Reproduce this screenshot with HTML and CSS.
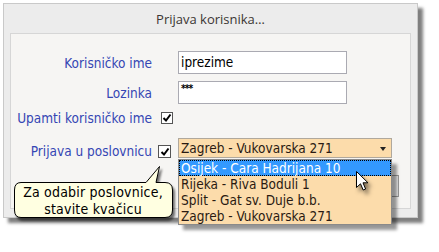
FILE: index.html
```html
<!DOCTYPE html>
<html lang="hr">
<head>
  <meta charset="UTF-8" />
  <title>Prijava korisnika</title>
  <link rel="stylesheet" href="styles.css">
</head>
<body>
  <div class="stage">
    <div class="window">
      <div class="window-title">Prijava korisnika…</div>

      <div class="panel">
        <div class="row row-input">
          <label class="label">Korisničko ime</label>
          <div class="field">iprezime</div>
        </div>

        <div class="row row-input">
          <label class="label">Lozinka</label>
          <div class="field field-pass">***</div>
        </div>

        <div class="row row-check">
          <label class="label">Upamti korisničko ime</label>
          <span class="check">
            <svg width="10" height="10" viewBox="0 0 10 10"><path d="M1.5 5 L4 7.5 L8.5 1.5" fill="none" stroke="#000" stroke-width="2"/></svg>
          </span>
        </div>

        <div class="row row-office">
          <label class="label">Prijava u poslovnicu</label>
          <span class="check check-office">
            <svg width="10" height="10" viewBox="0 0 10 10"><path d="M1.5 5 L4 7.5 L8.5 1.5" fill="none" stroke="#000" stroke-width="2"/></svg>
          </span>
          <div class="select-wrap">
            <div class="select">
              <span>Zagreb - Vukovarska 271</span>
              <span class="arrow"></span>
            </div>
            <ul class="dropdown">
              <li class="active">Osijek - Cara Hadrijana 10</li>
              <li>Rijeka - Riva Boduli 1</li>
              <li>Split - Gat sv. Duje b.b.</li>
              <li>Zagreb - Vukovarska 271</li>
            </ul>
          </div>
        </div>

        <div class="row row-button">
          <button class="btn">Prijava</button>
        </div>
      </div>
    </div>

    <!-- tooltip balloon -->
    <div class="balloon">
      <svg class="balloon-shape" width="166" height="58" viewBox="0 0 166 58">
        <path d="M9 18.5 H134 L147.5 2.5 L144 18.5 H153 Q160.5 18.5 160.5 26 V46 Q160.5 53.5 153 53.5 H9 Q2.5 53.5 2.5 46 V26 Q2.5 18.5 9 18.5 Z" fill="#ffffe1" stroke="#000" stroke-width="1"/>
      </svg>
      <div class="balloon-text">Za odabir poslovnice,<br>stavite kvačicu</div>
    </div>

    <!-- mouse cursor -->
    <svg class="cursor" width="14" height="21" viewBox="0 0 14 21">
      <path d="M0.5 0.5 L0.5 16.5 L4.5 12.8 L7.2 19 L9.6 18 L7 11.8 L12 11.8 Z" fill="#fff" stroke="#000" stroke-width="1"/>
    </svg>
  </div>
</body>
</html>
```

FILE: styles.css
```css
* {
  margin: 0;
  padding: 0;
  box-sizing: border-box;
}

body {
  background: #fff;
  font-family: "DejaVu Sans Condensed", "DejaVu Sans", sans-serif;
  font-size: 13.5px;
  color: #000;
}

.stage {
  position: relative;
  width: 439px;
  height: 252px;
  overflow: hidden;
}

.window {
  margin: 3px 0 0 3px;
  width: 415px;
  height: 215px;
  background: #ececec;
  border: 1px solid #c9c9c9;
  box-shadow: 5px 5px 3px rgba(0, 0, 0, 0.5);
}

.window-title {
  height: 29px;
  text-align: center;
  font-family: "Open Sans", "Noto Sans", sans-serif;
  font-size: 13px;
  line-height: 31px;
  color: #3b3633;
}

.panel {
  margin: 0 6px 0 6px;
  height: 176px;
  background: #f6f5f3;
  border: 1px solid #d6d6d6;
  padding-top: 17px;
}

.row {
  display: flex;
  align-items: center;
}

.label {
  width: 141px;
  flex: none;
  text-align: right;
  color: #3546b4;
  white-space: nowrap;
}

.row-input {
  height: 23px;
  margin-bottom: 7px;
}

.field {
  margin-left: 26px;
  width: 169px;
  height: 23px;
  background: #fff;
  border: 1px solid #aaaab2;
  padding-left: 2px;
  line-height: 21px;
}

.field-pass {
  font-size: 10px;
  font-weight: bold;
  line-height: 10px;
  padding-top: 2px;
  letter-spacing: -1px;
}

.row-check {
  height: 14px;
  margin-top: 4px;
}

.check {
  margin-left: 9px;
  width: 12px;
  height: 12px;
  border: 1px solid #555;
  background: #fff;
  display: flex;
  align-items: center;
  justify-content: center;
}

.row-office {
  margin-top: 13px;
  height: 20px;
  align-items: flex-end;
}

.row-office .label {
  margin-bottom: -1px;
}

.check-office {
  margin-left: 6px;
  width: 13px;
  height: 13px;
}

.select-wrap {
  position: relative;
  margin-left: 7px;
  align-self: flex-start;
}

.select {
  width: 214px;
  height: 20px;
  background: #fcdcab;
  border: 1px solid #b0a89c;
  display: flex;
  align-items: center;
  justify-content: space-between;
  padding: 0 5px 0 2px;
  color: #2a1a12;
}

.arrow {
  width: 0;
  height: 0;
  border-left: 3.5px solid transparent;
  border-right: 3.5px solid transparent;
  border-top: 4px solid #222;
  margin-top: 1px;
}

.dropdown {
  position: absolute;
  left: 0;
  top: 21px;
  width: 214px;
  list-style: none;
  background: #fcdcab;
  border: 1px solid #8a8a8a;
  box-shadow: 5px 5px 3px rgba(0, 0, 0, 0.4);
  color: #2a1a12;
  z-index: 2;
}

.dropdown li {
  height: 16px;
  line-height: 16px;
  padding-left: 2px;
}

.dropdown li.active {
  background: #3399ff;
  color: #fff;
  border: 1px dotted #000;
  line-height: 14px;
  padding-left: 1px;
}

.row-button {
  margin-top: 17px;
  justify-content: flex-end;
  padding-right: 11px;
}

.btn {
  width: 90px;
  height: 22px;
  background: #ececec;
  border: 1px solid #9a9a9a;
  font-family: inherit;
  font-size: 13px;
}

.balloon {
  position: absolute;
  left: 12px;
  top: 164px;
  width: 166px;
  height: 58px;
  z-index: 3;
}

.balloon-shape {
  display: block;
  filter: drop-shadow(2px 3px 1px rgba(0, 0, 0, 0.55));
}

.balloon-text {
  position: absolute;
  left: 2px;
  top: 20px;
  width: 158px;
  text-align: center;
  font-size: 14px;
  letter-spacing: 0.2px;
  line-height: 17px;
  color: #000;
}

.cursor {
  position: absolute;
  left: 356px;
  top: 171px;
  z-index: 4;
  filter: drop-shadow(3px 4px 2px rgba(0, 0, 0, 0.5));
}
```
